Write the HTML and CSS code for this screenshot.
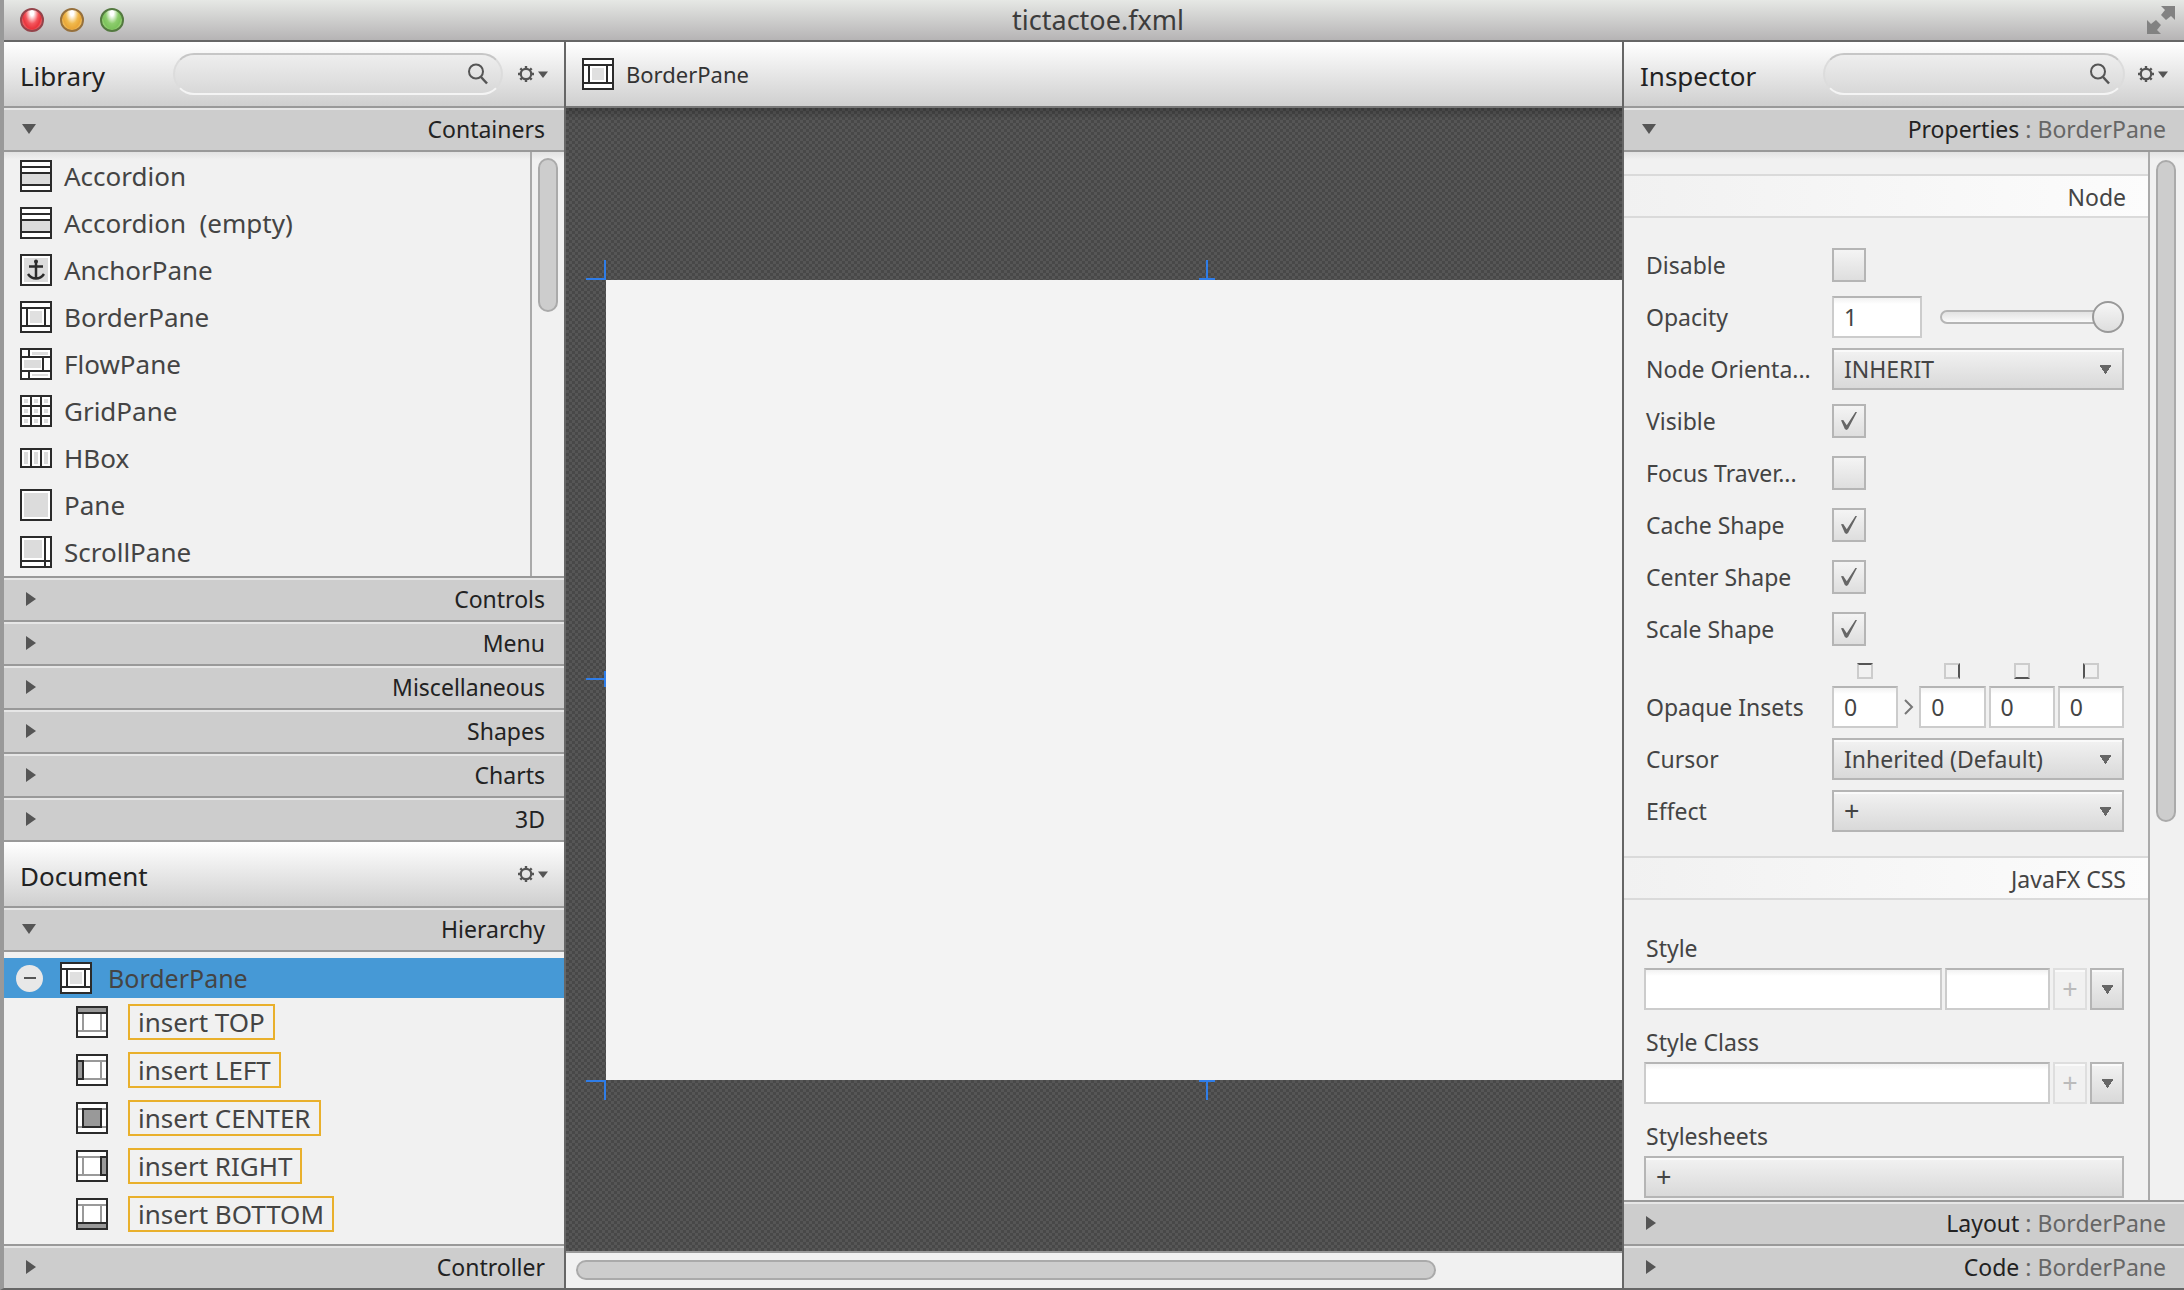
FILE: index.html
```html
<!DOCTYPE html>
<html lang="en">
<head>
<meta charset="utf-8">
<title>tictactoe.fxml</title>
<link rel="stylesheet" href="styles.css">
</head>
<body>
<svg class="defs" aria-hidden="true">
  <defs>
    <symbol id="search" viewBox="0 0 22 22"><circle cx="9" cy="8.500" r="7" fill="none" stroke="#555" stroke-width="2"/><path d="M14 14l6 6.500" stroke="#555" stroke-width="2.500"/></symbol>
    <symbol id="gear" viewBox="0 0 32 18"><circle cx="9" cy="9" r="5.200" fill="none" stroke="#555" stroke-width="2.200"/><path d="M9 1v3M9 14v3M1 9h3M14 9h3M3.300 3.300l2.200 2.200M12.500 12.500l2.200 2.200M3.300 14.700l2.200-2.200M12.500 5.500l2.200-2.200" stroke="#555" stroke-width="2.400"/><path d="M21 6.500h10l-5 6.500z" fill="#555"/></symbol>
    <symbol id="accordion" viewBox="0 0 32 32"><path fill="#fff" stroke="#2b2b2b" stroke-width="2" d="M1 1h30v30H1z"/><path fill="#dcdcdc" d="M2 14h28v10H2z"/><path stroke="#2b2b2b" stroke-width="2" d="M1 7h30M1 13h30M1 25h30"/></symbol>
    <symbol id="anchor" viewBox="0 0 32 32"><path fill="#fff" stroke="#2b2b2b" stroke-width="2" d="M1 1h30v30H1z"/><path fill="#dcdcdc" d="M4 4h24v24H4z"/><path fill="none" stroke="#2b2b2b" stroke-width="2.500" d="M16 7v17M9 12.500h14M8 20q3 4.500 8 4.500t8-4.500"/><circle cx="16" cy="7.500" r="2" fill="#2b2b2b"/></symbol>
    <symbol id="border" viewBox="0 0 32 32"><path fill="#fff" stroke="#2b2b2b" stroke-width="2" d="M1 1h30v30H1z"/><path fill="#e0e0e0" d="M10 10h12v12H10z"/><path fill="none" stroke="#2b2b2b" stroke-width="2" d="M1 7h30M1 25h30M7 7v18M25 7v18"/></symbol>
    <symbol id="flow" viewBox="0 0 32 32"><path fill="#fff" stroke="#2b2b2b" stroke-width="2" d="M1 1h30v30H1z"/><path fill="#dcdcdc" d="M12 4h16v3H12zM4 12h17v8H4zM12 26h16v2H12z"/><path fill="none" stroke="#2b2b2b" stroke-width="2" d="M1 9h30M1 23h30M9 1v8M23 9v14M9 23v8"/></symbol>
    <symbol id="grid" viewBox="0 0 32 32"><path fill="#fff" stroke="#2b2b2b" stroke-width="2" d="M1 1h30v30H1z"/><path stroke="#dcdcdc" stroke-width="4" d="M4 6h4M14 6h4M24 6h4M4 16h4M14 16h4M24 16h4M4 26h4M14 26h4M24 26h4"/><path stroke="#2b2b2b" stroke-width="2" d="M1 11h30M1 21h30M11 1v30M21 1v30"/></symbol>
    <symbol id="hbox" viewBox="0 0 32 32"><path fill="#fff" stroke="#2b2b2b" stroke-width="2" d="M1 7h30v18H1z"/><path stroke="#dcdcdc" stroke-width="4" d="M6 10v12M16 10v12M26 10v12"/><path stroke="#2b2b2b" stroke-width="2" d="M11 7v18M21 7v18"/></symbol>
    <symbol id="pane" viewBox="0 0 32 32"><path fill="#fff" stroke="#2b2b2b" stroke-width="2" d="M1 1h30v30H1z"/><path fill="#dcdcdc" d="M4 4h24v24H4z"/></symbol>
    <symbol id="scroll" viewBox="0 0 32 32"><path fill="#fff" stroke="#2b2b2b" stroke-width="2" d="M1 1h30v30H1z"/><path fill="#dcdcdc" d="M4 4h18v18H4z"/><path stroke="#2b2b2b" stroke-width="2" d="M1 25h30M25 1v30"/></symbol>
    <symbol id="slot" viewBox="0 0 32 32"><path fill="#fff" d="M1 1h30v30H1z"/><path fill="none" stroke="#999" stroke-width="2" d="M1 7h30M1 25h30M7 7v18M25 7v18"/></symbol>
    <symbol id="frame" viewBox="0 0 32 32"><path fill="none" stroke="#2b2b2b" stroke-width="2" d="M1 1h30v30H1z"/></symbol>
  </defs>
</svg>
<div class="window">
  <header class="titlebar">
    <div class="lights"><button class="light red" aria-label="Close"></button><button class="light amber" aria-label="Minimize"></button><button class="light green" aria-label="Zoom"></button></div>
    <h1 class="title">tictactoe.fxml</h1>
    <button class="plain full" aria-label="Full screen"><svg width="30" height="30" viewBox="0 0 30 30"><path fill="#828282" d="M15 1h14v14l-4-4-5 4-5-5 4-5zM1 29V15l4 4 5-4 5 5-4 5 4 4z"/></svg></button>
  </header>
  <div class="body">
    <aside class="side left">
      <div class="toolbar"><h2>Library</h2><label class="search"><input type="text" aria-label="Search library"><svg width="22" height="22"><use href="#search"/></svg></label><button class="plain" aria-label="Library menu"><svg width="32" height="18"><use href="#gear"/></svg></button></div>
      <button class="section open"><i class="tri"></i><span>Containers</span></button>
      <div class="scroller library">
        <ul class="items">
          <li><svg><use href="#accordion"/></svg>Accordion</li>
          <li><svg><use href="#accordion"/></svg>Accordion &nbsp;(empty)</li>
          <li><svg><use href="#anchor"/></svg>AnchorPane</li>
          <li><svg><use href="#border"/></svg>BorderPane</li>
          <li><svg><use href="#flow"/></svg>FlowPane</li>
          <li><svg><use href="#grid"/></svg>GridPane</li>
          <li><svg><use href="#hbox"/></svg>HBox</li>
          <li><svg><use href="#pane"/></svg>Pane</li>
          <li><svg><use href="#scroll"/></svg>ScrollPane</li>
        </ul>
        <div class="track"><div class="thumb"></div></div>
      </div>
      <button class="section"><i class="tri"></i><span>Controls</span></button>
      <button class="section"><i class="tri"></i><span>Menu</span></button>
      <button class="section"><i class="tri"></i><span>Miscellaneous</span></button>
      <button class="section"><i class="tri"></i><span>Shapes</span></button>
      <button class="section"><i class="tri"></i><span>Charts</span></button>
      <button class="section"><i class="tri"></i><span>3D</span></button>
      <div class="toolbar"><h2>Document</h2><button class="plain" aria-label="Document menu"><svg width="32" height="18"><use href="#gear"/></svg></button></div>
      <button class="section open"><i class="tri"></i><span>Hierarchy</span></button>
      <div class="tree">
        <div class="root"><button class="collapse" aria-label="Collapse"></button><svg><use href="#border"/></svg><span>BorderPane</span></div>
        <ul class="slots">
          <li><svg viewBox="0 0 32 32"><use href="#slot"/><path fill="#999" stroke="#2b2b2b" stroke-width="2" d="M1 1h30v6H1z"/><use href="#frame"/></svg><span>insert TOP</span></li>
          <li><svg viewBox="0 0 32 32"><use href="#slot"/><path fill="#999" stroke="#2b2b2b" stroke-width="2" d="M1 7h6v18H1z"/><use href="#frame"/></svg><span>insert LEFT</span></li>
          <li><svg viewBox="0 0 32 32"><use href="#slot"/><path fill="#999" stroke="#2b2b2b" stroke-width="2" d="M7 7h18v18H7z"/><use href="#frame"/></svg><span>insert CENTER</span></li>
          <li><svg viewBox="0 0 32 32"><use href="#slot"/><path fill="#999" stroke="#2b2b2b" stroke-width="2" d="M25 7h6v18h-6z"/><use href="#frame"/></svg><span>insert RIGHT</span></li>
          <li><svg viewBox="0 0 32 32"><use href="#slot"/><path fill="#999" stroke="#2b2b2b" stroke-width="2" d="M1 25h30v6H1z"/><use href="#frame"/></svg><span>insert BOTTOM</span></li>
        </ul>
      </div>
      <button class="section"><i class="tri"></i><span>Controller</span></button>
    </aside>
    <main class="center">
      <div class="toolbar crumb"><svg><use href="#border"/></svg><span>BorderPane</span></div>
      <div class="canvas">
        <div class="stage">
          <i class="handle corner top"></i><i class="handle mid top"></i><i class="handle side-mid"></i><i class="handle corner bottom"></i><i class="handle mid bottom"></i>
        </div>
      </div>
      <div class="hscroll"><div class="hthumb"></div></div>
    </main>
    <aside class="side right">
      <div class="toolbar"><h2>Inspector</h2><label class="search"><input type="text" aria-label="Search inspector"><svg width="22" height="22"><use href="#search"/></svg></label><button class="plain" aria-label="Inspector menu"><svg width="32" height="18"><use href="#gear"/></svg></button></div>
      <button class="section open"><i class="tri"></i><span>Properties <em>: BorderPane</em></span></button>
      <div class="scroller inspector">
        <form class="props">
          <h3 class="group">Node</h3>
          <div class="fields">
            <label for="disable">Disable</label><input type="checkbox" id="disable">
            <label for="opacity">Opacity</label><div class="row"><input class="text num" type="text" id="opacity" value="1"><input type="range" aria-label="Opacity slider" min="0" max="1" step="0.1" value="1"></div>
            <label for="orient">Node Orienta...</label><select id="orient"><option>INHERIT</option></select>
            <label for="visible">Visible</label><input type="checkbox" id="visible" checked>
            <label for="focus">Focus Traver...</label><input type="checkbox" id="focus">
            <label for="cache">Cache Shape</label><input type="checkbox" id="cache" checked>
            <label for="cshape">Center Shape</label><input type="checkbox" id="cshape" checked>
            <label for="sshape">Scale Shape</label><input type="checkbox" id="sshape" checked>
          </div>
          <div class="fields insets">
            <label for="itop">Opaque Insets</label>
            <div class="inset-grid">
              <i class="edge edge-top"></i><i></i><i class="edge edge-right"></i><i class="edge edge-bottom"></i><i class="edge edge-left"></i>
              <input class="text" type="text" id="itop" value="0"><svg class="chev" width="10" height="16" viewBox="0 0 10 16"><path d="M1 1l7 7-7 7" fill="none" stroke="#777" stroke-width="2"/></svg><input class="text" type="text" aria-label="Right inset" value="0"><input class="text" type="text" aria-label="Bottom inset" value="0"><input class="text" type="text" aria-label="Left inset" value="0">
            </div>
            <label for="cursor">Cursor</label><select id="cursor"><option>Inherited (Default)</option></select>
            <label for="effect">Effect</label><select id="effect" class="plus"><option>+</option></select>
          </div>
          <h3 class="group">JavaFX CSS</h3>
          <div class="css">
            <label for="style">Style</label>
            <div class="line"><input class="text grow" type="text" id="style"><input class="text value" type="text" aria-label="Style value"><button type="button" class="btn plus" disabled>+</button><button type="button" class="btn drop" aria-label="Style menu"></button></div>
            <label for="sclass">Style Class</label>
            <div class="line"><input class="text grow" type="text" id="sclass"><button type="button" class="btn plus" disabled>+</button><button type="button" class="btn drop" aria-label="Style class menu"></button></div>
            <label for="sheets">Stylesheets</label>
            <div class="line"><button type="button" class="btn plus wide" id="sheets">+</button></div>
          </div>
        </form>
        <div class="track"><div class="thumb"></div></div>
      </div>
      <button class="section"><i class="tri"></i><span>Layout <em>: BorderPane</em></span></button>
      <button class="section"><i class="tri"></i><span>Code <em>: BorderPane</em></span></button>
    </aside>
  </div>
</div>
</body>
</html>
```

FILE: styles.css
```css
* { box-sizing: border-box; }
html, body { height: 100%; margin: 0; }
body {
  background: #8f8f8f;
  color: #444;
  font: 23px/32px "Noto Sans", "Open Sans", sans-serif;
  overflow: hidden;
}
button, input, select { font: inherit; color: inherit; margin: 0; }
h1, h2, h3, ul { margin: 0; padding: 0; font-weight: 400; list-style: none; }
em { font-style: normal; color: #666; }
.defs { position: absolute; width: 0; height: 0; }

.window {
  display: flex;
  flex-direction: column;
  height: 100vh;
  border-left: 4px solid #999;
  border-bottom: 2px solid #666;
}
.titlebar {
  display: grid;
  grid-template-columns: 1fr auto 1fr;
  align-items: center;
  height: 42px;
  padding: 0 8px 0 16px;
  background: linear-gradient(#e6e8e5, #b6b4b5);
  border-bottom: 2px solid #666;
}
.title { font-size: 27px; color: #3c3c3c; }
.lights { display: flex; gap: 16px; }
.light {
  width: 24px;
  height: 24px;
  padding: 0;
  border: 2px solid #6b5a4c;
  border-radius: 50%;
}
.red { background: radial-gradient(ellipse at 50% 15%, #fff 0 12%, #f4555c 45%, #e8343c 65%, #ffb0b0 100%); border-color: #94434a; }
.amber { background: radial-gradient(ellipse at 50% 15%, #fff 0 12%, #f0b94c 45%, #e9a638 65%, #ffee9c 100%); border-color: #96703c; }
.green { background: radial-gradient(ellipse at 50% 15%, #fff 0 12%, #8ccc6c 45%, #7cc25c 65%, #d2f7a8 100%); border-color: #53793f; }
.plain { display: flex; padding: 0; border: 0; background: none; }
.full { justify-self: end; }

.body { display: flex; flex: 1; min-height: 0; }
.side { display: flex; flex-direction: column; flex: 0 0 560px; min-width: 0; background: #f1f1f1; }
.center { display: flex; flex-direction: column; flex: 1; min-width: 0; border: solid #666; border-width: 0 2px; }

.toolbar {
  display: flex;
  align-items: center;
  flex: none;
  height: 66px;
  padding: 0 15px 0 16px;
  background: linear-gradient(#fff, #cfcfcf);
  border-bottom: 2px solid #999;
}
.toolbar h2 { flex: 1; font-size: 26px; color: #222; padding-top: 4px; }
.search {
  display: flex;
  align-items: center;
  width: 330px;
  height: 42px;
  margin: 0 14px 0 0;
  padding: 0 12px 0 20px;
  border: 2px solid #ccc;
  border-color: #c6c6c6 #dcdcdc #f4f4f4;
  border-radius: 21px;
  background: linear-gradient(#eee, #d8d8d8);
}
.search input { flex: 1; min-width: 0; border: 0; background: none; }
.right .search { width: 302px; margin-right: 12px; }
.crumb { gap: 12px; color: #333; font-size: 22px; border-color: #777; }
.crumb svg { width: 32px; height: 32px; }

.section {
  display: flex;
  align-items: center;
  justify-content: space-between;
  flex: none;
  width: 100%;
  height: 44px;
  padding: 0 19px 0 18px;
  border: 0;
  border-bottom: 2px solid #999;
  background: #cdcdcd;
  box-shadow: inset 0 2px #e6e6e6;
  color: #222;
  text-align: right;
}
.right .section { padding-right: 18px; }
.side > .section:last-child { height: 42px; border-bottom: 0; }
.tri { margin-left: 4px; border: 7px solid transparent; border-left: 10px solid #555; border-right: 0; }
.open .tri { margin-left: 0; border: 7px solid transparent; border-top: 10px solid #555; border-bottom: 0; }

.scroller { display: flex; min-height: 0; overflow: hidden; border-bottom: 2px solid #999; background: linear-gradient(#e2e2e2, #f1f1f1 8px); }
.items { flex: 1; padding-bottom: 1px; font-size: 26px; }
.items li { display: flex; align-items: center; gap: 12px; height: 47px; padding-left: 16px; white-space: pre; }
.items svg, .root svg, .slots svg { width: 32px; height: 32px; flex: none; }
.track { flex: 0 0 36px; padding: 8px 6px; border-left: 2px solid #aaa; }
.left .track { flex-basis: 34px; padding-top: 6px; }
.thumb { width: 20px; height: 662px; border: 2px solid #aaa; border-radius: 10px; background: #cdcdcd; }
.left .thumb { height: 154px; }

.tree { flex: 1; min-height: 0; padding-top: 6px; border-bottom: 2px solid #999; font-size: 26px; }
.root { display: flex; align-items: center; height: 40px; padding-left: 12px; background: #4699d6; font-size: 25px; }
.root svg { margin: 0 16px 0 17px; }
.collapse { width: 27px; height: 27px; padding: 0; border: 0; border-radius: 50%; background: linear-gradient(#555, #555) center/12px 2px no-repeat, #e8e8e8; }
.slots li { display: flex; align-items: center; gap: 20px; height: 48px; padding-left: 72px; }
.slots span { height: 36px; line-height: 32px; padding: 0 8px; border: 2px solid #e9b02c; }

.canvas {
  flex: 1;
  min-height: 0;
  padding: 172px 0 0 40px;
  background:
    linear-gradient(rgba(0,0,0,.22), rgba(0,0,0,0) 12px),
    conic-gradient(#484848 25%, #565656 0 50%, #484848 0 75%, #565656 0) 0 0/6px 6px;
}
.stage { position: relative; height: 800px; background: #f3f3f3; }
.handle { position: absolute; color: #2f7de8; }
.corner { left: -20px; width: 20px; height: 20px; border-right: 2px solid; }
.corner.top { top: -20px; border-bottom: 2px solid; }
.corner.bottom { bottom: -20px; border-top: 2px solid; }
.mid { left: 593px; width: 16px; height: 20px; background: linear-gradient(currentColor, currentColor) center/2px 100% no-repeat; }
.mid.top { top: -20px; border-bottom: 2px solid; }
.mid.bottom { bottom: -20px; border-top: 2px solid; }
.side-mid { left: -20px; top: 391px; width: 20px; height: 16px; border-right: 2px solid; background: linear-gradient(currentColor, currentColor) center/100% 2px no-repeat; }
.hscroll { flex: none; height: 37px; padding: 7px 10px; background: #f1f1f1; border-top: 2px solid #999; }
.hthumb { width: 83%; height: 20px; border: 2px solid #aaa; border-radius: 10px; background: #cdcdcd; }

.inspector { flex: 1; }
.props { flex: 1; min-width: 0; padding-top: 22px; }
.group {
  height: 44px;
  padding: 0 22px;
  border: solid #dadada;
  border-width: 2px 0;
  background: linear-gradient(90deg, #f1f1f1, #fcfcfc);
  font-size: 23px;
  line-height: 42px;
  text-align: right;
}
.fields { display: grid; grid-template-columns: 186px 1fr; grid-auto-rows: 42px; row-gap: 10px; align-items: center; padding: 26px 24px 0 22px; }
.insets { grid-template-rows: 66px; padding-top: 12px; margin-bottom: 24px; }
.insets > label:first-child { align-self: end; height: 42px; line-height: 42px; }
.row { display: flex; gap: 18px; align-items: center; }
.text {
  min-width: 0;
  width: 100%;
  height: 42px;
  padding: 0 10px;
  border: 2px solid #ccc;
  border-top-color: #b5b5b5;
  background: linear-gradient(#f2f2f2, #fff 6px);
}
.num { width: 90px; }
input[type="checkbox"] {
  appearance: none;
  width: 34px;
  height: 34px;
  border: 2px solid #b5b5b5;
  background: linear-gradient(#f4f4f4, #dedede);
}
input[type="checkbox"]:checked::before {
  content: "";
  display: block;
  width: 16px;
  height: 18px;
  margin: 6px 7px;
  background: #666;
  clip-path: polygon(0 46%, 14% 44%, 36% 74%, 90% 0, 100% 0, 44% 94%, 34% 100%, 24% 94%);
}
input[type="range"] { appearance: none; flex: 1; min-width: 0; height: 32px; margin: 0; background: none; }
input[type="range"]::-webkit-slider-runnable-track { height: 14px; border: 2px solid #b5b5b5; border-radius: 7px; background: linear-gradient(#e2e2e2, #fafafa); }
input[type="range"]::-webkit-slider-thumb { appearance: none; position: relative; left: 2px; width: 32px; height: 32px; margin-top: -11px; border: 2px solid #999; border-radius: 50%; background: linear-gradient(#f6f6f6, #dedede); }
select, .btn {
  appearance: none;
  height: 42px;
  border: 2px solid #b5b5b5;
  border-radius: 0;
  background: linear-gradient(#f2f2f2, #d9d9d9);
  box-shadow: inset 0 2px #fafafa;
}
select {
  width: 100%;
  padding: 0 10px;
  background:
    conic-gradient(from -34deg at 50% 100%, #666 68deg, transparent 0) right 10px center/13px 9px no-repeat,
    linear-gradient(#f2f2f2, #d9d9d9);
}
.inset-grid { display: grid; grid-template-columns: 1fr 15px 1fr 1fr 1fr; column-gap: 3px; row-gap: 7px; justify-items: center; }
.edge { width: 16px; height: 16px; border: 2px solid #ccc; }
.edge-top { border-top-color: #555; }
.edge-right { border-right-color: #555; }
.edge-bottom { border-bottom-color: #555; }
.edge-left { border-left-color: #555; }
.chev { align-self: center; }
.css { display: flex; flex-direction: column; padding: 30px 24px 0 20px; }
.css label { height: 38px; line-height: 36px; padding-left: 2px; }
.line { display: flex; gap: 3px; height: 42px; margin-bottom: 14px; }
.line .grow { flex: 1; }
.line .value { flex: 0 0 105px; }
.btn { flex: 0 0 34px; padding: 0; line-height: 36px; }
.plus { font-size: 27px; }
.btn:disabled { border-color: #dedede; background: #f1f1f1; color: #bbb; }
.drop {
  background:
    conic-gradient(from -34deg at 50% 100%, #666 68deg, transparent 0) center/13px 9px no-repeat,
    linear-gradient(#f2f2f2, #d9d9d9);
}
.wide { flex: 1; padding: 0 10px; text-align: left; }
```
